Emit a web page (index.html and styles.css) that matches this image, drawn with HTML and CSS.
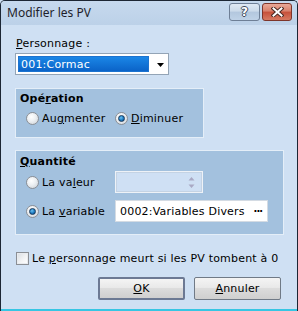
FILE: index.html
```html
<!DOCTYPE html>
<html>
<head>
<meta charset="utf-8">
<link rel="stylesheet" href="styles.css">
</head>
<body>
<div class="window">
  <div class="titlebar">
    <span class="title">Modifier les PV</span>
    <div class="caption-btns">
      <div class="cbtn cbtn-help"><span class="qmark">?</span></div>
      <div class="cbtn cbtn-close">
        <svg width="13" height="10" viewBox="0 0 13 10">
          <path d="M2.5 1.5 L10.5 8.5 M10.5 1.5 L2.5 8.5" stroke="#4a2a24" stroke-width="4" stroke-linecap="square"/>
          <path d="M2.5 1.5 L10.5 8.5 M10.5 1.5 L2.5 8.5" stroke="#ffffff" stroke-width="2" stroke-linecap="square"/>
        </svg>
      </div>
    </div>
  </div>
  <div class="client">
    <div class="label"><u>P</u>ersonnage :</div>
    <div class="combo">
      <span class="combo-sel">001:Cormac</span>
      <span class="combo-arrow">
        <svg width="7" height="4" viewBox="0 0 7 4"><path d="M0 0 H7 L3.5 4 Z" fill="#000"/></svg>
      </span>
    </div>

    <div class="group group-op">
      <div class="group-title">Opé<u>r</u>ation</div>
      <div class="op-row">
        <div class="opt"><span class="radio"></span><span>Au<u>g</u>menter</span></div>
        <div class="opt"><span class="radio checked"><span class="dot"></span></span><span><u>D</u>iminuer</span></div>
      </div>
    </div>

    <div class="group group-qty">
      <div class="group-title"><u>Q</u>uantité</div>
      <div class="qty-row qty-row-first">
        <div class="opt"><span class="radio"></span><span>La va<u>l</u>eur</span></div>
        <div class="spin">
          <span class="spin-arrows">
            <svg width="7" height="13" viewBox="0 0 7 13"><path d="M3.5 1 L6.5 4.5 H0.5 Z M0.5 8.5 H6.5 L3.5 12 Z" fill="#a9a9c4"/></svg>
          </span>
        </div>
      </div>
      <div class="qty-row">
        <div class="opt"><span class="radio checked"><span class="dot"></span></span><span>La <u>v</u>ariable</span></div>
        <div class="varbox"><span>0002:Variables Divers</span><span class="ellipsis">&middot;&middot;&middot;</span></div>
      </div>
    </div>

    <div class="check-row">
      <span class="checkbox"></span><span>Le <u>p</u>ersonnage meurt si les PV tombent à 0</span>
    </div>

    <div class="btn-row">
      <div class="btn btn-default"><u>O</u>K</div>
      <div class="btn"><u>A</u>nnuler</div>
    </div>
  </div>
</div>
</body>
</html>
```

FILE: styles.css
```css
* { box-sizing: border-box; }
html, body { margin: 0; padding: 0; }
body {
  width: 298px;
  height: 311px;
  overflow: hidden;
  background: #cfe0f3;
  font-family: "DejaVu Sans", Verdana, sans-serif;
  font-size: 11px;
  letter-spacing: 0.2px;
  color: #000;
}
u { text-decoration: underline; text-underline-offset: 1px; }

.window {
  width: 298px;
  height: 311px;
  border: 1px solid #1c2634;
  border-top-left-radius: 5px;
  border-top-right-radius: 5px;
  border-bottom: none;
  background: #cfe0f3;
  display: flex;
  flex-direction: column;
  position: relative;
  box-shadow: inset 0 -2px 0 #37c6e3, inset 0 -1px 0 #1c2634;
}

/* Title bar */
.titlebar {
  height: 24px;
  flex: none;
  display: flex;
  align-items: flex-start;
  justify-content: space-between;
  background: linear-gradient(#c6d9ee, #bcd1e8);
  border-top-left-radius: 4px;
  border-top-right-radius: 4px;
}
.title {
  font-family: "Noto Sans", "Open Sans", sans-serif;
  font-size: 12px;
  letter-spacing: 0;
  color: #1e1e2a;
  margin: 4px 0 0 6px;
  line-height: 16px;
}
.caption-btns {
  display: flex;
  gap: 2px;
  margin: 2px 5px 0 0;
}
.cbtn {
  height: 18px;
  border-radius: 3px;
  display: flex;
  align-items: center;
  justify-content: center;
}
.cbtn-help {
  width: 31px;
  border: 1px solid #6e7f96;
  background: linear-gradient(#dfe9f4 0%, #cbdaea 45%, #b3c7de 50%, #bfd2e7 100%);
}
.qmark {
  font-family: "DejaVu Sans", sans-serif;
  font-weight: bold;
  font-size: 12px;
  color: #fff;
  letter-spacing: 0;
  line-height: 12px;
  text-shadow: -1px 0 #3d4a5c, 1px 0 #3d4a5c, 0 -1px #3d4a5c, 0 1px #3d4a5c;
}
.cbtn-close {
  width: 30px;
  border: 1px solid #7d352a;
  background: linear-gradient(#e9a898 0%, #d8806b 45%, #c6503a 50%, #d67a62 100%);
}

/* Client area */
.client {
  flex: 1;
  padding: 12px 0 0 14px;
  display: flex;
  flex-direction: column;
  align-items: flex-start;
}
.label {
  line-height: 13px;
  margin-left: 1px;
}
.combo {
  margin-top: 3px;
  width: 154px;
  height: 22px;
  background: #fff;
  border: 1px solid #93a4b6;
  display: flex;
  align-items: center;
  padding: 0 0 0 2px;
}
.combo-sel {
  width: 131px;
  height: 16px;
  line-height: 16px;
  padding-left: 2px;
  color: #fff;
  background: linear-gradient(#1b86e6, #0b63c8);
  border: 1px solid #1d73cf;
}
.combo-arrow {
  display: flex;
  margin-left: 8px;
  margin-top: 1px;
}

/* Groups */
.group {
  background: #a3c1de;
  border: 1px solid #e4eef8;
  padding: 3px 0 0 4px;
}
.group-title {
  font-weight: bold;
  line-height: 13px;
}
.group-op {
  margin-top: 13px;
  width: 189px;
  height: 50px;
}
.op-row {
  margin-top: 7px;
  margin-left: 6px;
  display: grid;
  grid-template-columns: 89px auto;
  align-items: center;
}
.opt {
  display: flex;
  align-items: center;
  gap: 3px;
  line-height: 13px;
}
.radio {
  width: 13px;
  height: 13px;
  border-radius: 50%;
  border: 1px solid #8b8f95;
  background: radial-gradient(circle at 40% 35%, #ffffff 0%, #eceff2 45%, #c9ced4 100%);
  display: flex;
  align-items: center;
  justify-content: center;
  flex: none;
}
.dot {
  width: 7px;
  height: 7px;
  border-radius: 50%;
  background: radial-gradient(circle at 40% 35%, #6ac0f0 0%, #1d7ac0 55%, #0b3e74 100%);
  border: 1px solid #163a5e;
}

.group-qty {
  margin-top: 12px;
  width: 269px;
  height: 85px;
  padding-top: 4px;
}
.qty-row {
  margin-left: 6px;
  display: grid;
  grid-template-columns: 89px auto;
  align-items: center;
  margin-top: 7px;
}
.qty-row-first { margin-top: 3px; }
.spin {
  width: 88px;
  height: 22px;
  background: #cfe0f4;
  border: 1px solid #eef2f7;
  box-shadow: inset 0 0 0 1px #c4d3e4;
  display: flex;
  justify-content: flex-end;
  align-items: center;
  padding-right: 7px;
}
.spin-arrows { display: flex; }
.varbox {
  width: 153px;
  height: 22px;
  background: #fff;
  border: 1px solid #d4dbe3;
  display: flex;
  align-items: center;
  justify-content: space-between;
  padding: 0 5px 0 4px;
}
.ellipsis {
  font-weight: bold;
  letter-spacing: -1px;
  font-size: 10px;
}

/* Checkbox */
.check-row {
  margin-top: 17px;
  margin-left: 1px;
  display: flex;
  align-items: center;
  gap: 3px;
  line-height: 13px;
}
.checkbox {
  width: 13px;
  height: 13px;
  border: 1px solid #8b8f95;
  background: linear-gradient(135deg, #d9dde2 0%, #f4f5f6 60%, #ffffff 100%);
  box-shadow: inset 0 0 0 1px #e8ebee;
  flex: none;
}

/* Buttons */
.btn-row {
  margin-top: 12px;
  margin-left: 83px;
  display: flex;
  gap: 9px;
}
.btn {
  width: 87px;
  height: 23px;
  border: 1px solid #707a86;
  border-radius: 2px;
  background: linear-gradient(#f4f4f4 0%, #e9e9e9 45%, #dcdcdc 50%, #cfcfcf 100%);
  display: flex;
  align-items: center;
  justify-content: center;
  line-height: 13px;
}
.btn-default {
  border: 2px solid #6c7993;
}
```
